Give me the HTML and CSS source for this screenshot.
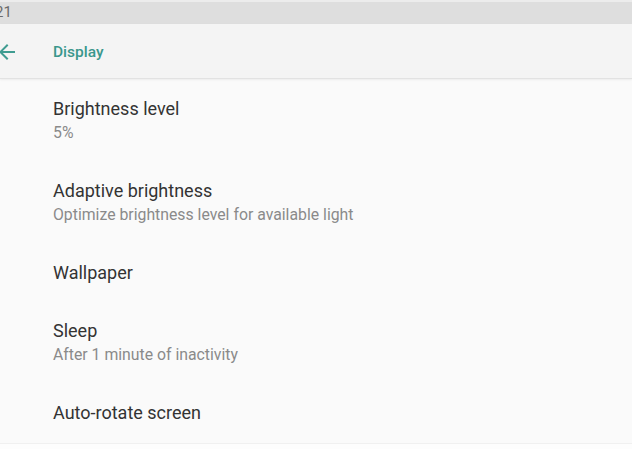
FILE: index.html
```html
<!DOCTYPE html>
<html>
<head>
<meta charset="utf-8">
<link rel="stylesheet" href="styles.css">
</head>
<body>
<div class="screen">
  <div class="topedge"></div>
  <div class="statusbar"><span class="clock">21</span></div>
  <div class="toolbar">
    <svg class="back" viewBox="0 0 24 24" width="24" height="24"><path d="M20 11H7.83l5.59-5.59L12 4l-8 8 8 8 1.41-1.41L7.83 13H20v-2z" fill="#3f9c91"/></svg>
    <span class="title">Display</span>
  </div>
  <div class="list">
    <div class="item two"><div class="t">Brightness level</div><div class="s">5%</div></div>
    <div class="item two"><div class="t">Adaptive brightness</div><div class="s">Optimize brightness level for available light</div></div>
    <div class="item"><div class="t">Wallpaper</div></div>
    <div class="item two"><div class="t">Sleep</div><div class="s">After 1 minute of inactivity</div></div>
    <div class="item"><div class="t">Auto-rotate screen</div></div>
  </div>
  <div class="bottom"></div>
</div>
</body>
</html>
```
FILE: styles.css
```css
html, body {
  margin: 0;
  padding: 0;
  background: #fafafa;
  font-family: Roboto, "Noto Sans", sans-serif;
  overflow: hidden;
}
.screen {
  width: 632px;
  height: 449px;
  display: flex;
  flex-direction: column;
  overflow: hidden;
}
.topedge {
  height: 2px;
  background: #ececec;
}
.statusbar {
  height: 22px;
  background: #dedede;
  display: flex;
  align-items: center;
}
.clock {
  margin-left: -5px;
  font-size: 15px;
  color: #6a6a6a;
  line-height: 22px;
  margin-top: -2px;
}
.toolbar {
  height: 54px;
  background: #f4f4f4;
  display: flex;
  align-items: center;
  border-bottom: 1px solid #e2e2e2;
  box-shadow: 0 1px 2px rgba(0,0,0,0.06);
  position: relative;
}
.back {
  margin-left: -5px;
  margin-top: 2px;
  flex: none;
}
.title {
  margin-left: 34px;
  font-size: 15.5px;
  font-weight: 500;
  color: #3a978c;
  margin-top: 2px;
}
.list {
  flex: 1;
  padding-left: 53px;
}
.item {
  padding: 17px 0;
  height: 24px;
}
.item.two {
  height: 48px;
}
.t {
  font-size: 18px;
  line-height: 24px;
  color: #333333;
  margin-top: 1px;
}
.s {
  font-size: 15.8px;
  line-height: 24px;
  color: #8a8a8a;
}
.bottom {
  height: 5px;
  border-top: 1px solid #f0f0f0;
  background: #fdfdfd;
}
```
